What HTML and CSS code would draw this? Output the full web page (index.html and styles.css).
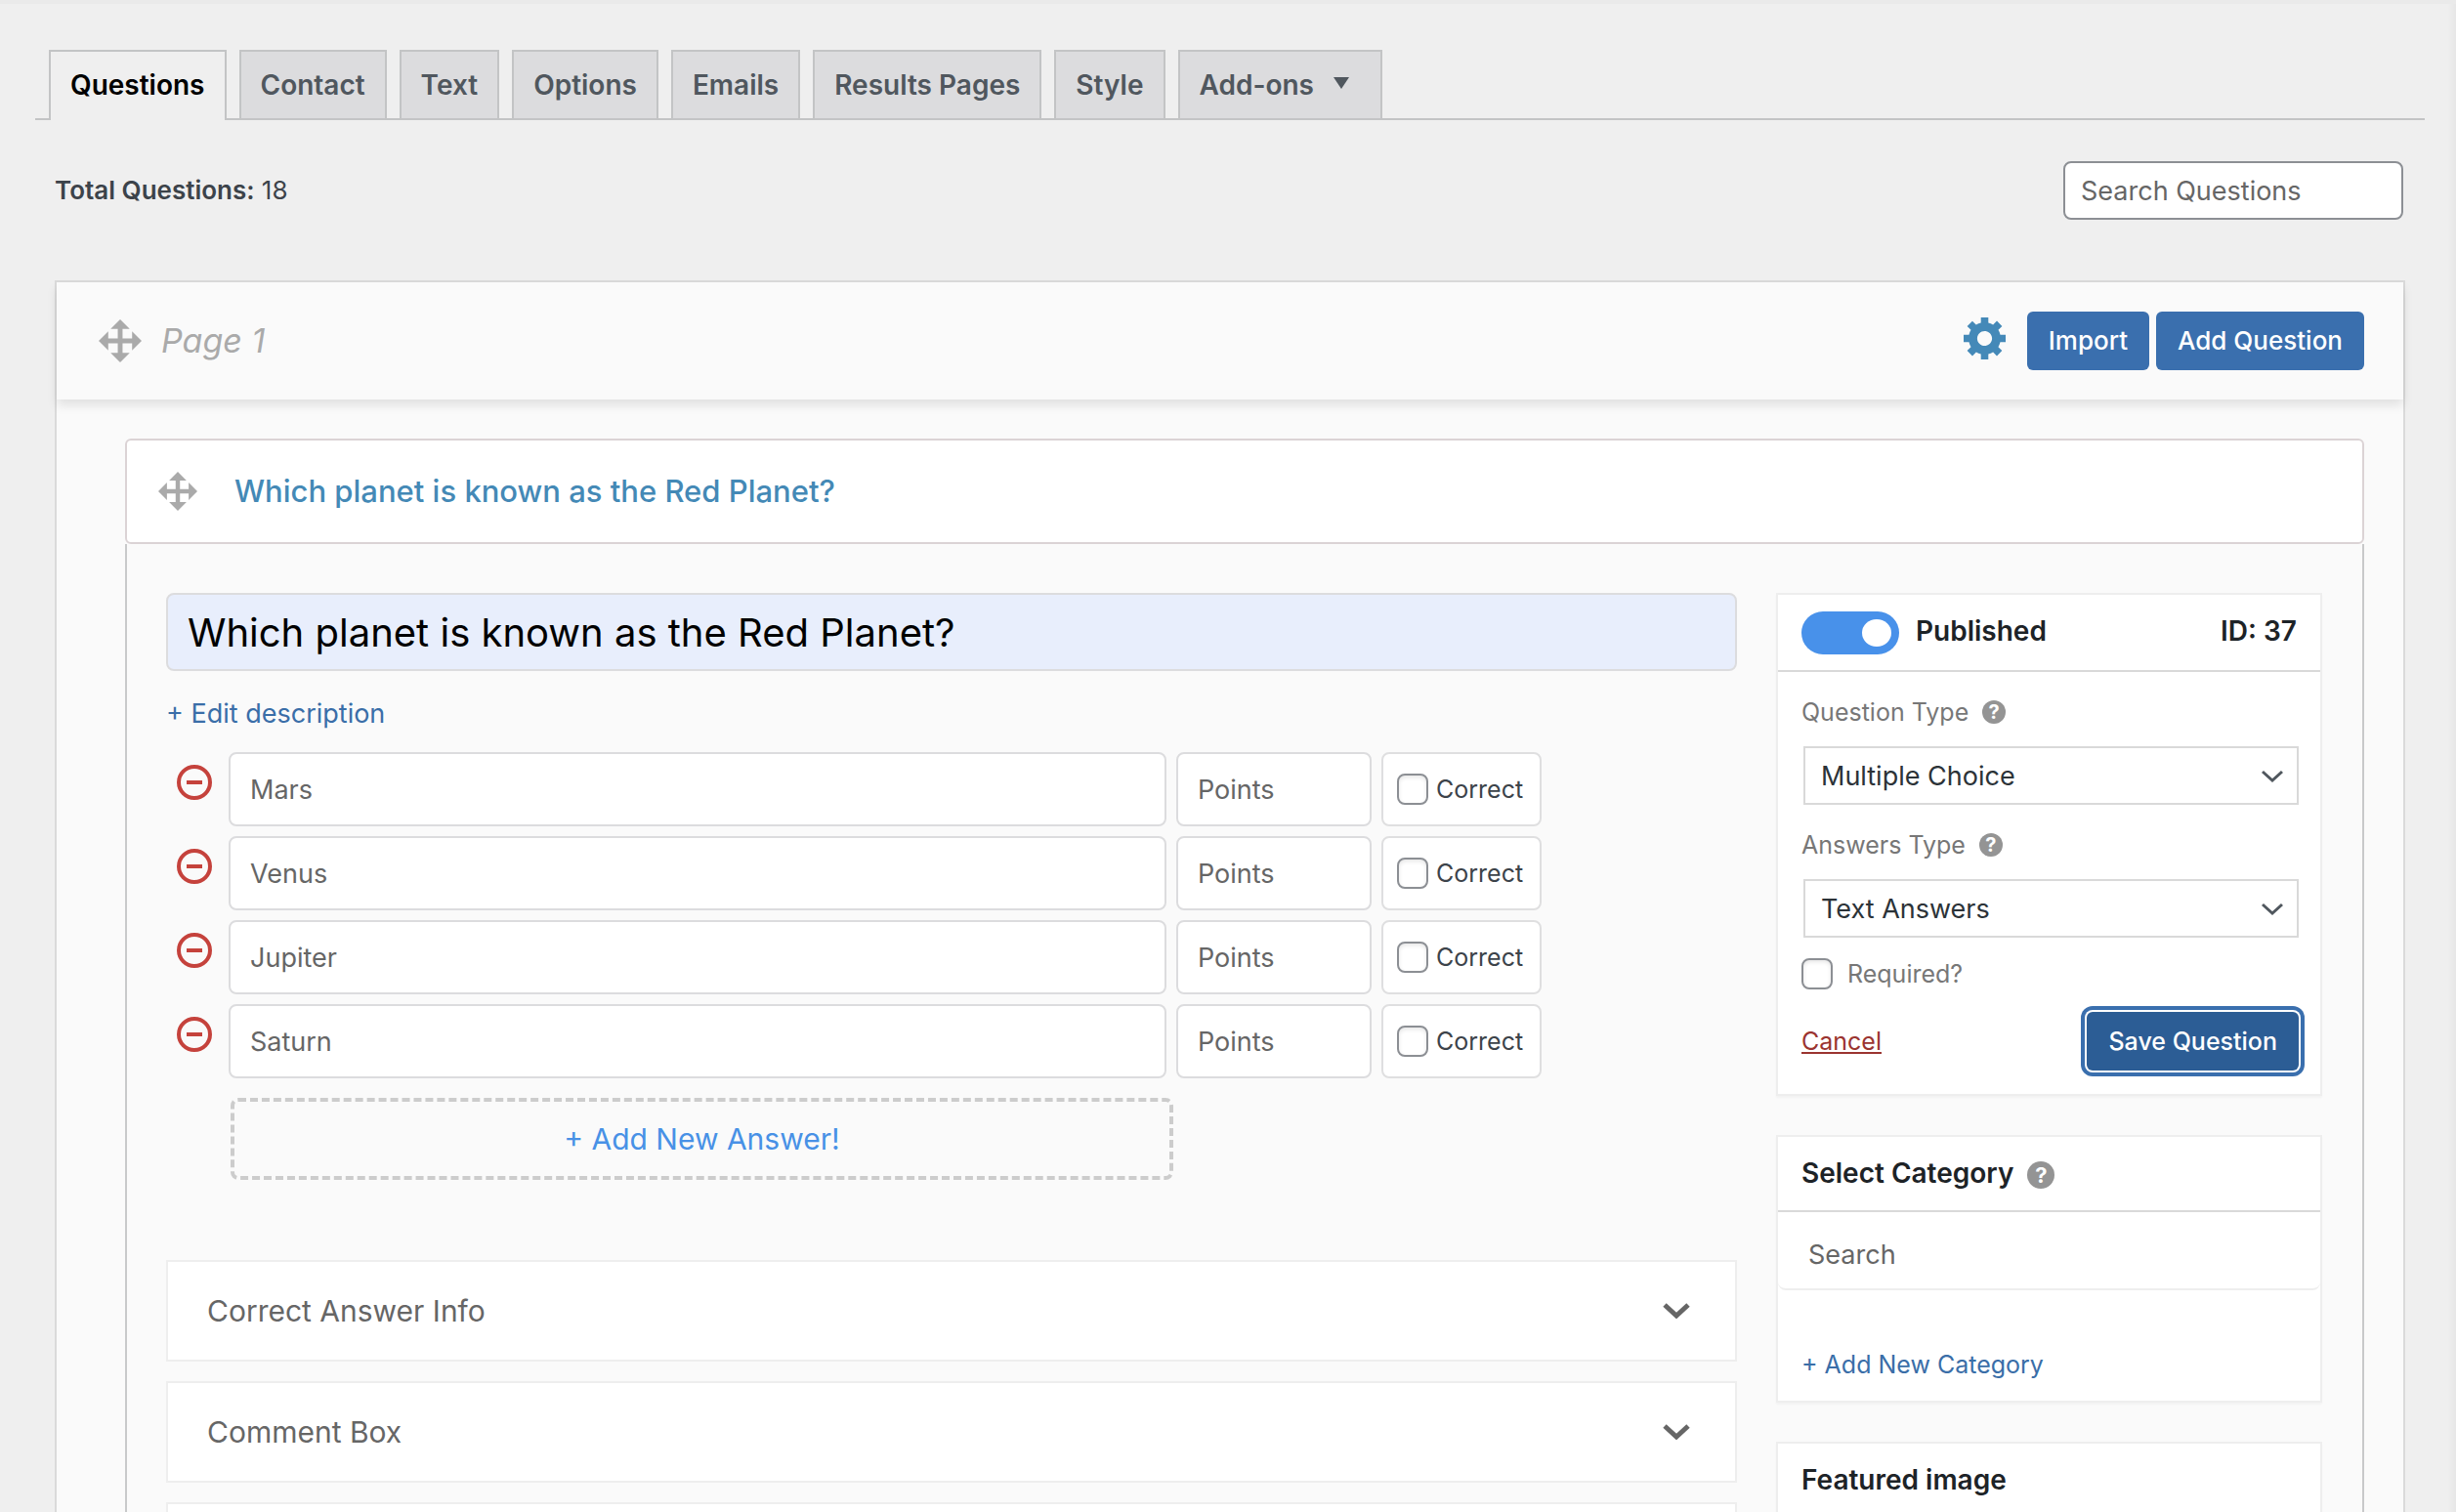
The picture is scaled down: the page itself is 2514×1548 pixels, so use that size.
FILE: index.html
```html
<!DOCTYPE html>
<html lang="en">

<head>
    <meta charset="UTF-8">
    <meta name="viewport" content="width=device-width, initial-scale=1.0">
    <title>Questions</title>
    <link rel="stylesheet" href="styles.css">
</head>

<body>

    <!-- shared icons -->
    <svg class="sprite" aria-hidden="true">
        <symbol id="icon-move" viewBox="1 1 18 18">
            <path d="M19 10l-4 4v-3h-4v4h3l-4 4-4-4h3v-4H5v3l-4-4 4-4v3h4V5H6l4-4 4 4h-3v4h4V6z" />
        </symbol>
        <symbol id="icon-gear" viewBox="1 2 17 17">
            <path d="M18 12h-2.18c-.17.7-.44 1.35-.81 1.93l1.54 1.54-2.1 2.1-1.54-1.54c-.58.36-1.23.63-1.91.79V19H8v-2.18c-.68-.16-1.33-.43-1.91-.79l-1.54 1.54-2.12-2.12 1.54-1.54c-.36-.58-.63-1.23-.79-1.91H1V9.03h2.17c.16-.7.44-1.35.8-1.94L2.43 5.55l2.1-2.1 1.54 1.54c.58-.37 1.24-.64 1.93-.81V2h3v2.18c.68.16 1.33.43 1.91.79l1.54-1.54 2.12 2.12-1.54 1.54c.36.59.64 1.24.8 1.94H18V12zm-8.5 1.5c1.66 0 3-1.34 3-3s-1.34-3-3-3-3 1.34-3 3 1.34 3 3 3z" />
        </symbol>
        <symbol id="icon-minus" viewBox="0 0 36 36">
            <circle cx="18" cy="18" r="16" fill="none" stroke="currentColor" stroke-width="4" />
            <path d="M10 16h16v4H10z" />
        </symbol>
        <symbol id="icon-chevron" viewBox="0 0 28 16">
            <path d="M2 2l12 11L26 2" fill="none" stroke="currentColor" stroke-width="5" />
        </symbol>
        <symbol id="icon-arrow" viewBox="0 0 22 14">
            <path d="M1 2l10 9 10-9" fill="none" stroke="currentColor" stroke-width="3" />
        </symbol>
    </svg>

    <div class="wrap">
        <nav class="nav-tabs">
            <a class="nav-tab nav-tab-active" href="#questions">Questions</a>
            <a class="nav-tab" href="#contact">Contact</a>
            <a class="nav-tab" href="#text">Text</a>
            <a class="nav-tab" href="#options">Options</a>
            <a class="nav-tab" href="#emails">Emails</a>
            <a class="nav-tab" href="#results">Results Pages</a>
            <a class="nav-tab" href="#style">Style</a>
            <a class="nav-tab" href="#addons">Add-ons <span class="caret"></span></a>
        </nav>

        <div class="toolbar">
            <div class="total"><strong>Total Questions:</strong> 18</div>
            <input class="search-questions" type="search" placeholder="Search Questions" aria-label="Search Questions">
        </div>

        <section class="page">
            <header class="page-header">
                <svg class="icon-move"><use href="#icon-move" /></svg>
                <span class="page-name">Page 1</span>
                <button class="gear-button" type="button" aria-label="Page settings">
                    <svg class="icon-gear"><use href="#icon-gear" /></svg>
                </button>
                <div class="page-actions">
                    <button class="button" type="button">Import</button>
                    <button class="button" type="button">Add Question</button>
                </div>
            </header>

            <div class="page-content">
                <div class="question-header">
                    <svg class="icon-move icon-move-small"><use href="#icon-move" /></svg>
                    <span class="question-name">Which planet is known as the Red Planet?</span>
                </div>

                <form class="question-body">
                    <div class="main-column">
                        <input class="question-title" type="text" value="Which planet is known as the Red Planet?" aria-label="Question title">
                        <a class="edit-description" href="#description">+ Edit description</a>

                        <div class="answers">
                            <div class="answer">
                                <button class="remove" type="button" aria-label="Delete answer"><svg><use href="#icon-minus" /></svg></button>
                                <input class="field" type="text" value="Mars" aria-label="Answer">
                                <input class="field" type="text" placeholder="Points" aria-label="Points">
                                <label class="correct"><input class="checkbox" type="checkbox"> Correct</label>
                            </div>
                            <div class="answer">
                                <button class="remove" type="button" aria-label="Delete answer"><svg><use href="#icon-minus" /></svg></button>
                                <input class="field" type="text" value="Venus" aria-label="Answer">
                                <input class="field" type="text" placeholder="Points" aria-label="Points">
                                <label class="correct"><input class="checkbox" type="checkbox"> Correct</label>
                            </div>
                            <div class="answer">
                                <button class="remove" type="button" aria-label="Delete answer"><svg><use href="#icon-minus" /></svg></button>
                                <input class="field" type="text" value="Jupiter" aria-label="Answer">
                                <input class="field" type="text" placeholder="Points" aria-label="Points">
                                <label class="correct"><input class="checkbox" type="checkbox"> Correct</label>
                            </div>
                            <div class="answer">
                                <button class="remove" type="button" aria-label="Delete answer"><svg><use href="#icon-minus" /></svg></button>
                                <input class="field" type="text" value="Saturn" aria-label="Answer">
                                <input class="field" type="text" placeholder="Points" aria-label="Points">
                                <label class="correct"><input class="checkbox" type="checkbox"> Correct</label>
                            </div>
                        </div>

                        <button class="add-answer" type="button">+ Add New Answer!</button>

                        <div class="accordions">
                            <button class="accordion" type="button">Correct Answer Info <svg class="icon-chevron"><use href="#icon-chevron" /></svg></button>
                            <button class="accordion" type="button">Comment Box <svg class="icon-chevron"><use href="#icon-chevron" /></svg></button>
                            <div class="accordion"></div>
                        </div>
                    </div>

                    <aside class="sidebar">
                        <div class="card">
                            <div class="card-header">
                                <input class="toggle" type="checkbox" id="published" checked>
                                <label for="published">Published</label>
                                <span class="question-id">ID: 37</span>
                            </div>
                            <div class="card-body">
                                <div class="label-row">
                                    <label for="questionType">Question Type</label> <span class="help">?</span>
                                </div>
                                <div class="select-wrap">
                                    <select class="select" id="questionType">
                                        <option>Multiple Choice</option>
                                    </select>
                                    <svg class="select-arrow"><use href="#icon-arrow" /></svg>
                                </div>
                                <div class="label-row">
                                    <label for="answersType">Answers Type</label> <span class="help">?</span>
                                </div>
                                <div class="select-wrap">
                                    <select class="select" id="answersType">
                                        <option>Text Answers</option>
                                    </select>
                                    <svg class="select-arrow"><use href="#icon-arrow" /></svg>
                                </div>
                                <label class="required"><input class="checkbox" type="checkbox"> Required?</label>
                                <div class="save-row">
                                    <a class="cancel" href="#cancel">Cancel</a>
                                    <button class="button button-save" type="button">Save Question</button>
                                </div>
                            </div>
                        </div>

                        <div class="card">
                            <div class="card-header">
                                Select Category <span class="help help-large">?</span>
                            </div>
                            <input class="category-search" type="text" placeholder="Search" aria-label="Search categories">
                            <a class="add-category" href="#category">+ Add New Category</a>
                        </div>

                        <div class="card">
                            <div class="card-header">Featured image</div>
                        </div>
                    </aside>
                </form>
            </div>
        </section>
    </div>

</body>

</html>
```

FILE: styles.css
```css
* {
    box-sizing: border-box;
}

html {
    scrollbar-width: none;
}

body {
    margin: 0;
    background-color: #efefef;
    color: #3c434a;
    font-family: Inter, "Liberation Sans", sans-serif;
    font-size: 27px;
    line-height: 36px;
}

input,
select,
button {
    margin: 0;
    font-family: inherit;
    font-size: 27px;
}

button {
    padding: 0;
    border: none;
    background: none;
    cursor: pointer;
}

a {
    color: #3a6ea8;
    text-decoration: none;
}

svg {
    display: block;
    fill: currentColor;
}

::placeholder {
    color: #666;
    opacity: 1;
}

.sprite {
    position: absolute;
    width: 0;
    height: 0;
}

.wrap {
    padding: 47px 32px 0 36px;
    border-top: 4px solid #eaeaea;
    box-shadow: inset -10px 0 6px -6px rgba(0, 0, 0, 0.04);
}

/* tabs */
.nav-tabs {
    display: flex;
    gap: 13px;
    padding-left: 14px;
    border-bottom: 2px solid #c3c4c5;
}

.nav-tab {
    display: flex;
    align-items: center;
    padding: 10px 20px;
    border: 2px solid #c3c4c5;
    border-bottom: none;
    background-color: #dcdcde;
    color: #50575e;
    font-size: 28px;
    font-weight: 600;
    line-height: 48px;
}

.nav-tab-active {
    margin-bottom: -2px;
    padding-bottom: 12px;
    background-color: #efefef;
    color: #000;
}

.caret {
    margin: 0 12px 4px 20px;
    border: 8px solid transparent;
    border-top: 12px solid #50575e;
    border-bottom: none;
}

/* total + search */
.toolbar {
    display: flex;
    align-items: center;
    justify-content: space-between;
    padding: 42px 22px 62px 20px;
}

.total {
    font-size: 26px;
}

.total strong {
    font-weight: 600;
}

.search-questions {
    width: 348px;
    height: 60px;
    padding: 0 16px;
    border: 2px solid #8c8f94;
    border-radius: 8px;
    background-color: #fff;
}

/* page panel */
.page {
    margin: 0 20px;
    border: 2px solid #dadada;
    background-color: #fafafa;
}

.page-header {
    display: flex;
    align-items: center;
    padding: 30px 40px 30px 43px;
    box-shadow: 0 6px 10px rgba(0, 0, 0, 0.1);
}

.icon-move {
    width: 44px;
    height: 44px;
    color: #aaa;
}

.icon-move-small {
    width: 40px;
    height: 40px;
}

.page-name {
    margin-left: 20px;
    color: #aaa;
    font-size: 34px;
    font-style: italic;
}

.gear-button {
    margin: 0 22px 6px auto;
    color: #4489b8;
}

.icon-gear {
    width: 43px;
    height: 43px;
}

.page-actions {
    display: flex;
    gap: 7px;
}

.button {
    padding: 0 22px;
    border-radius: 6px;
    background-color: #3a6fae;
    color: #fff;
    font-size: 26px;
    font-weight: 500;
    line-height: 60px;
}

.page-content {
    padding: 40px 40px 0 70px;
}

/* question */
.question-header {
    display: flex;
    align-items: center;
    padding: 32px;
    border: 2px solid #dbd3d5;
    border-radius: 6px;
    background-color: #fff;
}

.question-name {
    margin-left: 38px;
    color: #4489b6;
    font-size: 31px;
    font-weight: 500;
}

.question-body {
    display: grid;
    grid-template-columns: minmax(0, 1fr) 559px;
    column-gap: 40px;
    padding: 50px 41px 0 40px;
    border: 2px solid #c8c9ca;
    border-top: none;
    border-bottom: none;
}

.question-title {
    display: block;
    width: 100%;
    height: 80px;
    padding: 0 20px;
    border: 2px solid #dcdcde;
    border-radius: 8px;
    background-color: #e8eefc;
    color: #000;
    font-size: 40px;
}

.edit-description {
    display: block;
    margin: 26px 0 21px;
}

.answers {
    display: grid;
    gap: 10px;
}

.answer {
    display: grid;
    grid-template-columns: 54px minmax(0, 960px) 200px 164px;
    column-gap: 10px;
}

.remove {
    align-self: start;
    margin: 13px 0 0 11px;
    color: #c5423c;
}

.remove svg {
    width: 36px;
    height: 36px;
}

.field {
    width: 100%;
    height: 76px;
    padding: 0 20px;
    border: 2px solid #dcdcde;
    border-radius: 8px;
    background-color: #fff;
    color: #666;
}

.correct {
    display: flex;
    align-items: center;
    gap: 8px;
    padding-left: 14px;
    border: 2px solid #dfdfe0;
    border-radius: 8px;
    background-color: #fff;
    font-size: 25px;
}

.checkbox {
    width: 32px;
    height: 32px;
    border: 2px solid #8c8f94;
    border-radius: 8px;
    background-color: #fff;
    box-shadow: inset 0 2px 4px rgba(0, 0, 0, 0.1);
    appearance: none;
}

.add-answer {
    display: block;
    width: 60%;
    height: 84px;
    margin: 20px 0 0 66px;
    border: 4px dashed #ccc;
    border-radius: 8px;
    color: #4891e6;
    font-size: 30px;
}

.accordions {
    display: grid;
    gap: 20px;
    margin-top: 82px;
}

.accordion {
    display: flex;
    align-items: center;
    justify-content: space-between;
    min-height: 104px;
    padding: 0 46px 0 40px;
    border: 2px solid #eee;
    background-color: #fff;
    color: #666;
    font-size: 30px;
}

.icon-chevron {
    width: 28px;
    height: 16px;
}

/* sidebar */
.sidebar {
    display: flex;
    flex-direction: column;
    gap: 40px;
}

.card {
    border: 2px solid #eee;
    background-color: #fff;
    box-shadow: 0 2px 2px rgba(0, 0, 0, 0.03);
}

.card-header {
    display: flex;
    align-items: flex-start;
    min-height: 77px;
    padding: 17px 24px 16px;
    border-bottom: 2px solid #d9d9d9;
    color: #1d2327;
    font-size: 28px;
    font-weight: 600;
    line-height: 40px;
}

.toggle {
    width: 100px;
    height: 44px;
    margin-right: 17px;
    padding: 8px;
    border-radius: 22px;
    background-color: #ccc;
    appearance: none;
}

.toggle::before {
    content: "";
    display: block;
    width: 30px;
    height: 28px;
    border-radius: 50%;
    background-color: #fff;
}

.toggle:checked {
    background-color: #4891ea;
}

.toggle:checked::before {
    margin-left: auto;
}

.question-id {
    margin-left: auto;
}

.card-body {
    padding: 0 22px 24px 24px;
}

.label-row {
    display: flex;
    align-items: center;
    padding: 23px 0 17px;
    color: #777;
    font-size: 25px;
}

.help {
    width: 24px;
    margin-left: 14px;
    border-radius: 50%;
    background-color: #949494;
    color: #fff;
    font-size: 20px;
    font-weight: 700;
    line-height: 24px;
    text-align: center;
}

.help-large {
    width: 28px;
    margin-top: 8px;
    font-size: 22px;
    line-height: 28px;
}

.select-wrap {
    position: relative;
    margin-left: 2px;
}

.select {
    display: block;
    width: 100%;
    height: 60px;
    padding: 0 16px;
    border: 2px solid #d9d9d9;
    border-radius: 0;
    background-color: #fff;
    color: #2c3338;
    appearance: none;
}

/* sits over the native select */
.select-arrow {
    position: absolute;
    top: 24px;
    right: 16px;
    width: 22px;
    height: 14px;
    color: #50575e;
    pointer-events: none;
}

.required {
    display: flex;
    align-items: center;
    gap: 15px;
    padding: 19px 0 21px;
    color: #777;
    font-size: 25px;
}

.save-row {
    display: flex;
    align-items: center;
    justify-content: space-between;
}

.cancel {
    color: #9b3430;
    font-size: 25px;
    text-decoration: underline;
}

.button-save {
    background-color: #2c5d95;
    box-shadow: 0 0 0 2px #fff, 0 0 0 6px #3a6fae;
    font-size: 25px;
}

.category-search {
    display: block;
    width: 100%;
    height: 80px;
    padding: 8px 31px 0;
    border: none;
    border-bottom: 2px solid #eee;
    border-radius: 8px;
    background-color: #fff;
}

.add-category {
    display: block;
    padding: 58px 24px 19px;
    font-size: 25px;
}
```
